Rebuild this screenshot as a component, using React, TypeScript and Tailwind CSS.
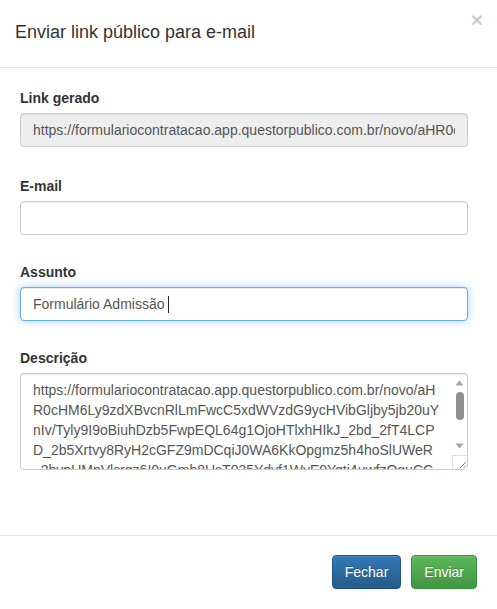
import { ReactNode } from 'react';

const descricaoLinhas = [
  'https://formulariocontratacao.app.questorpublico.com.br/novo/aH',
  'R0cHM6Ly9zdXBvcnRlLmFwcC5xdWVzdG9ycHVibGljby5jb20uY',
  'nIv/Tyly9I9oBiuhDzb5FwpEQL64g1OjoHTlxhHIkJ_2bd_2fT4LCP',
  'D_2b5Xrtvy8RyH2cGFZ9mDCqiJ0WA6KkOpgmz5h4hoSlUWeR',
  '_2bvpUMpVlsrqz6I0uGmh8UsT035Ydvf1WyE0Yqti4uwfzOguCC',
];

const inputBase =
  'block h-[34px] w-full rounded-[4px] border px-3 text-[14px] text-[#555] outline-none';

function FormGroup({ label, children, className = '' }: { label: string; children: ReactNode; className?: string }) {
  return (
    <div className={className}>
      <label className="mb-[5px] block text-[14px] leading-5 font-bold text-[#333]">{label}</label>
      {children}
    </div>
  );
}

function FakeScrollbar() {
  return (
    <div className="flex w-[15px] flex-col items-center">
      <div className="flex h-[16px] w-full items-center justify-center pt-[2px]">
        <svg width="9" height="6" viewBox="0 0 9 6">
          <path d="M0.5 5.5 L4.5 0.5 L8.5 5.5 Z" fill="#a3a3a3" />
        </svg>
      </div>
      <div className="mt-[2px] h-[28px] w-[8px] rounded-full bg-[#8f8f8f]" />
      <div className="flex-1" />
      <div className="flex h-[10px] w-full items-center justify-center">
        <svg width="9" height="6" viewBox="0 0 9 6">
          <path d="M0.5 0.5 L4.5 5.5 L8.5 0.5 Z" fill="#a3a3a3" />
        </svg>
      </div>
      <div className="mt-[4px] flex h-[14px] w-[15px] items-end justify-end border-t border-l border-[#e0e0e0] bg-white">
        <svg width="9" height="9" viewBox="0 0 9 9">
          <path d="M8 2 L2 8 M8 5.5 L5.5 8" stroke="#8a8a8a" strokeWidth="1" />
        </svg>
      </div>
    </div>
  );
}

export default function App() {
  return (
    <div
      className="flex h-[609px] w-[497px] flex-col bg-white text-[14px] text-[#333]"
      style={{ fontFamily: '"Liberation Sans", Arial, sans-serif' }}
    >
      <div className="flex h-[68px] items-start justify-between border-b border-[#e5e5e5] pr-[14px] pl-[15px]">
        <h4 className="pt-[19px] text-[18px] leading-[26px] font-normal text-[#333]">
          Enviar link público para e-mail
        </h4>
        <button className="mt-[9px] text-[21px] leading-none font-bold text-black opacity-20">×</button>
      </div>

      <div className="flex-1 pt-5 pl-5">
        <div className="w-[448px]">
          <FormGroup label="Link gerado" className="mb-[29px]">
            <input
              readOnly
              value="https://formulariocontratacao.app.questorpublico.com.br/novo/aHR0cHM6Ly9zdXBvcnRlLmFwcC5xdWVzdG9y"
              className={`${inputBase} border-[#ccc] bg-[#eee] shadow-[inset_0_1px_1px_rgba(0,0,0,0.075)]`}
              style={{ fontFamily: '"Liberation Sans", Arial, sans-serif' }}
            />
          </FormGroup>

          <FormGroup label="E-mail" className="mb-[27px]">
            <input
              className={`${inputBase} border-[#ccc] bg-white shadow-[inset_0_1px_1px_rgba(0,0,0,0.075)]`}
            />
          </FormGroup>

          <FormGroup label="Assunto" className="mb-[27px]">
            <div
              className={`${inputBase} flex items-center border-[#66afe9] bg-white shadow-[inset_0_1px_1px_rgba(0,0,0,0.075),0_0_8px_rgba(102,175,233,0.6)]`}
            >
              <span>Formulário Admissão&nbsp;</span>
              <span className="h-[17px] w-px bg-[#222]" />
            </div>
          </FormGroup>

          <FormGroup label="Descrição">
            <div className="flex h-[97px] w-full overflow-hidden rounded-[4px] border border-[#ccc] bg-white shadow-[inset_0_1px_1px_rgba(0,0,0,0.075)]">
              <div className="flex-1 overflow-hidden pt-[6px] pl-3 text-[14px] leading-5 text-[#555]">
                {descricaoLinhas.map((linha) => (
                  <div key={linha} className="whitespace-nowrap">
                    {linha}
                  </div>
                ))}
              </div>
              <FakeScrollbar />
            </div>
          </FormGroup>
        </div>
      </div>

      <div className="flex justify-end gap-[10px] border-t border-[#e5e5e5] px-5 pt-[19px] pb-5">
        <button className="h-[34px] rounded-[4px] border border-[#245580] bg-linear-to-b from-[#337ab7] to-[#265a88] px-3 text-[14px] text-white shadow-[inset_0_1px_0_rgba(255,255,255,0.15),0_1px_1px_rgba(0,0,0,0.075)] [text-shadow:0_-1px_0_rgba(0,0,0,0.2)]">
          Fechar
        </button>
        <button className="h-[34px] rounded-[4px] border border-[#3e8f3e] bg-linear-to-b from-[#5cb85c] to-[#419641] px-3 text-[14px] text-white shadow-[inset_0_1px_0_rgba(255,255,255,0.15),0_1px_1px_rgba(0,0,0,0.075)] [text-shadow:0_-1px_0_rgba(0,0,0,0.2)]">
          Enviar
        </button>
      </div>
    </div>
  );
}
